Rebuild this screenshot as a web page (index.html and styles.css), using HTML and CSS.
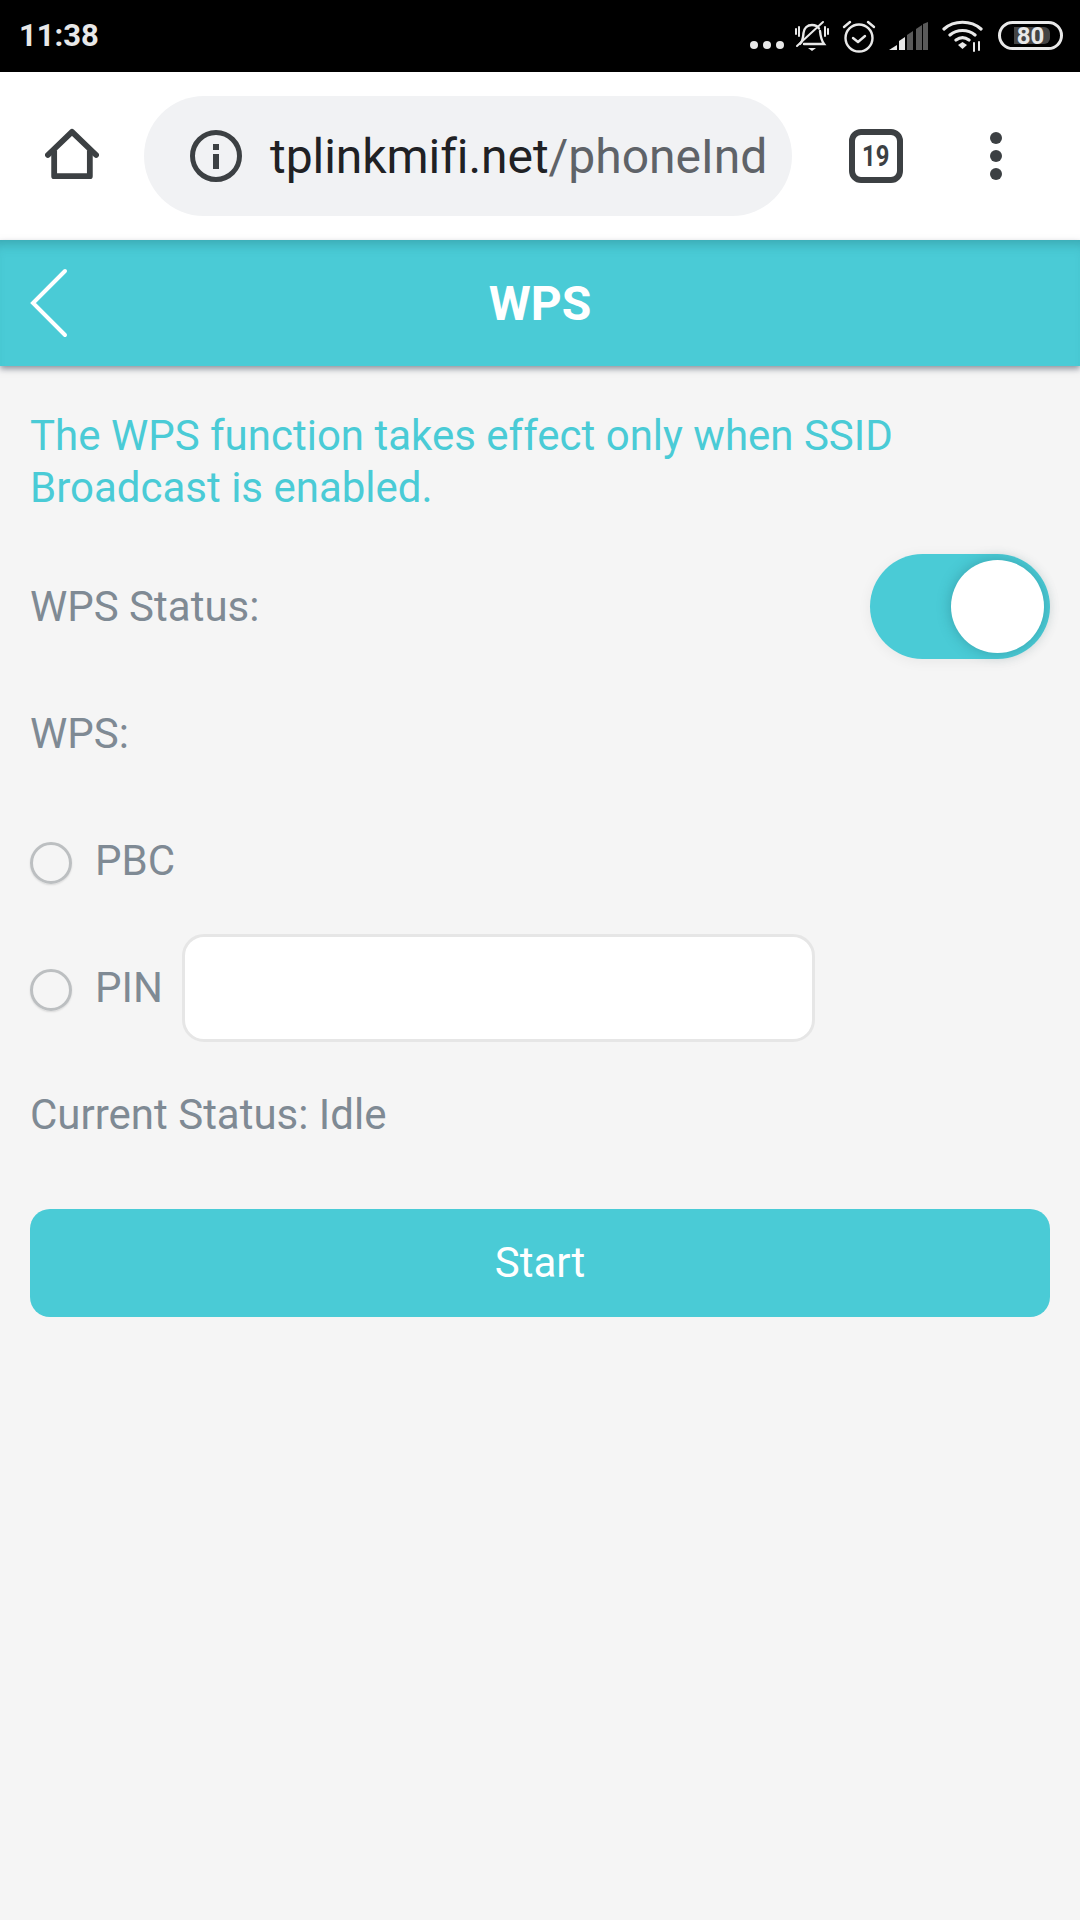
FILE: index.html
```html
<!DOCTYPE html>
<html lang="en">
<head>
    <meta charset="UTF-8">
    <meta name="viewport" content="width=device-width, initial-scale=1.0">
    <title>WPS</title>
    <link rel="stylesheet" href="styles.css">
</head>
<body>

<div class="status-bar">
    <span class="clock">11:38</span>
    <div class="status-icons">
        <svg class="ic-dots" width="38" height="10" viewBox="0 0 38 10"><circle cx="4" cy="5" r="4"/><circle cx="17" cy="5" r="4"/><circle cx="30" cy="5" r="4"/></svg>
        <svg class="ic-bell" width="34" height="32" viewBox="0 0 34 32" fill="none" stroke="#e8e8e8" stroke-width="2.4" stroke-linecap="round">
            <path d="M5 24c3-3 3-6 3.500-11 .5-5 4-8 8.500-8 3 0 5.500 1 7 3.500M25 11c.5 5 1 9 4 13H9"/>
            <path d="M2 26L28 2" stroke-width="2"/>
            <path d="M13 28h8l-4 3z" fill="#e8e8e8" stroke="none"/>
            <path d="M1 9v5M4 7v9M30 7v9M33 9v5" stroke-width="2"/>
        </svg>
        <svg class="ic-alarm" width="34" height="33" viewBox="0 0 34 33" fill="none" stroke="#e8e8e8" stroke-width="2.400" stroke-linecap="round" stroke-linejoin="round">
            <circle cx="17" cy="18" r="13.500"/>
            <path d="M11 18l5 4 7-6"/>
            <path d="M2 7l6-5M32 7l-6-5"/>
        </svg>
        <svg class="ic-signal" width="40" height="28" viewBox="0 0 40 28">
            <path d="M0 28l8-5v5z" fill="#e8e8e8"/>
            <path d="M10 28V19l6-4v13z" fill="#e8e8e8"/>
            <path d="M18 28V13l6-4v19zM27 28V7l6-4v25z" fill="#5a5a5a"/>
            <path d="M34 28V2l5-2v28z" fill="#5a5a5a"/>
        </svg>
        <svg class="ic-wifi" width="42" height="32" viewBox="0 0 42 32" fill="none" stroke="#e8e8e8" stroke-width="3.200" stroke-linecap="round">
            <path d="M2 9c10-9 27-9 37 0M8 15c7-6 18-6 25 0M14 20c4-3 9-3 13 0"/>
            <path d="M16 25l4.500-3 4.500 3-4.500 4z" fill="#e8e8e8" stroke="none"/>
            <path d="M32 23v8M37 22v8" stroke-width="2"/>
        </svg>
        <div class="battery"><div class="battery-fill"></div><span class="battery-num">80</span></div>
    </div>
</div>

<div class="browser-bar">
    <svg class="ic-home" width="54" height="54" viewBox="0 0 56 56" fill="none" stroke="#3c4043" stroke-width="6" stroke-linecap="round" stroke-linejoin="round">
        <path d="M3 28L28 4l25 24"/>
        <path d="M9.500 23v27h37V23" stroke-linecap="butt"/>
    </svg>
    <div class="omnibox">
        <svg class="ic-info" width="52" height="52" viewBox="0 0 52 52">
            <circle cx="26" cy="26" r="23.500" fill="none" stroke="#3c4043" stroke-width="5"/>
            <rect x="23" y="14" width="6" height="6" fill="#3c4043"/>
            <rect x="23" y="24" width="6" height="15" fill="#3c4043"/>
        </svg>
        <div class="url"><span class="host">tplinkmifi.net</span>/phoneInd</div>
    </div>
    <div class="tab-count"><span>19</span></div>
    <div class="menu-dots"><i></i><i></i><i></i></div>
</div>

<div class="header">
    <svg class="back" width="40" height="72" viewBox="0 0 40 72" fill="none" stroke="#fff" stroke-width="4" stroke-linecap="round" stroke-linejoin="miter">
        <path d="M36 3L4 35l32 32"/>
    </svg>
    <h1>WPS</h1>
</div>

<div class="content">
    <p class="notice">The WPS function takes effect only when SSID Broadcast is enabled.</p>

    <div class="row row-status">
        <span>WPS Status:</span>
        <div class="toggle"><div class="knob"></div></div>
    </div>

    <div class="row row-wps"><span>WPS:</span></div>

    <div class="row row-pbc">
        <div class="radio"></div>
        <span>PBC</span>
    </div>

    <div class="row row-pin">
        <div class="radio"></div>
        <span>PIN</span>
        <input class="pin-input" type="text">
    </div>

    <div class="row row-current"><span>Current Status: Idle</span></div>

    <button class="start-btn">Start</button>
</div>

</body>
</html>
```
FILE: styles.css
```css
* {
    box-sizing: border-box;
}

html, body {
    margin: 0;
    height: 1920px;
    overflow: hidden;
}

body {
    background-color: #f5f5f5;
    font-family: Roboto, Arial, sans-serif;
    color: #7f8a94;
}

/* status bar */
.status-bar {
    height: 72px;
    background-color: #000;
    display: flex;
    align-items: center;
    justify-content: space-between;
    padding: 0 17px 0 19px;
}

.clock {
    font-size: 31px;
    font-weight: 700;
    color: #e8e8e8;
    margin-top: -1px;
}

.status-icons {
    display: flex;
    align-items: center;
    height: 72px;
}

.ic-dots {
    fill: #e8e8e8;
    margin: 18px 7px 0 0;
}

.ic-bell {
    margin: 0 13px 0 0;
}

.ic-alarm {
    margin: 0 13px 0 0;
}

.ic-signal {
    margin: -1px 13px 0 0;
}

.ic-wifi {
    margin: 0 14px 0 0;
}

.battery {
    position: relative;
    width: 65px;
    height: 29px;
    border: 3px solid #e8e8e8;
    border-radius: 15px;
    margin-top: -1px;
    display: flex;
    align-items: center;
    justify-content: center;
}

.battery-fill {
    position: absolute;
    left: 13px;
    top: 3px;
    bottom: 3px;
    width: 36px;
    background-color: #444;
    border-radius: 0 6px 6px 0;
}

.battery-num {
    position: relative;
    font-size: 24px;
    font-weight: 700;
    color: #e8e8e8;
    line-height: 1;
}

/* browser toolbar */
.browser-bar {
    height: 168px;
    background-color: #fff;
    display: flex;
    align-items: center;
    padding-left: 45px;
}

.ic-home {
    flex: none;
    margin-top: -2px;
}

.omnibox {
    width: 648px;
    height: 120px;
    margin-left: 45px;
    background-color: #f1f2f4;
    border-radius: 60px;
    display: flex;
    align-items: center;
    padding-left: 46px;
    overflow: hidden;
}

.ic-info {
    flex: none;
}

.url {
    margin-left: 28px;
    font-size: 48px;
    color: #5f6368;
    white-space: nowrap;
    letter-spacing: -0.05px;
}

.host {
    color: #202124;
}

.tab-count {
    width: 54px;
    height: 54px;
    margin-left: 57px;
    border: 6px solid #3c4043;
    border-radius: 12px;
    display: flex;
    align-items: center;
    justify-content: center;
    font-size: 29px;
    font-weight: 700;
    color: #3c4043;
}

.tab-count span {
    transform: scaleX(0.82);
}

.menu-dots {
    margin-left: 87px;
    display: flex;
    flex-direction: column;
    gap: 6px;
}

.menu-dots i {
    display: block;
    width: 12px;
    height: 12px;
    border-radius: 50%;
    background-color: #3c4043;
}

/* page header */
.header {
    position: relative;
    height: 126px;
    background-color: #4acbd6;
    box-shadow: 0 3px 6px rgba(60, 70, 90, 0.55), inset 0 12px 12px -8px rgba(30, 100, 110, 0.35);
    display: flex;
    align-items: center;
    justify-content: center;
}

.header h1 {
    margin: 0;
    font-size: 48px;
    font-weight: 700;
    color: #fff;
}

.back {
    position: absolute;
    left: 29px;
    top: 28px;
}

/* content */
.content {
    padding: 44px 30px 0;
    font-size: 42px;
}

.notice {
    margin: 0;
    line-height: 52px;
    color: #4acbd6;
}

.row {
    display: flex;
    align-items: center;
    line-height: 48px;
}

.row-status {
    justify-content: space-between;
    margin-top: 40px;
    height: 105px;
}

.row-wps {
    margin-top: 23px;
    height: 104px;
}

.row-pbc {
    margin-top: 23px;
    height: 104px;
}

.row-pin {
    margin-top: 21px;
    height: 108px;
}

.row-current {
    margin-top: 21px;
    height: 104px;
}

.toggle {
    width: 180px;
    height: 105px;
    border-radius: 53px;
    background-color: #4acbd6;
    display: flex;
    align-items: center;
    justify-content: flex-end;
    padding-right: 6px;
    box-shadow: 0 2px 14px rgba(0, 0, 0, 0.06);
}

.knob {
    width: 93px;
    height: 93px;
    border-radius: 50%;
    background-color: #fff;
    box-shadow: 0 0 14px rgba(30, 100, 110, 0.4);
}

.radio {
    flex: none;
    width: 42px;
    height: 42px;
    margin: 4px 23px 0 0;
    border: 3px solid #bcbfc1;
    border-radius: 50%;
    box-shadow: 0 1px 2px rgba(0, 0, 0, 0.12);
}

.pin-input {
    width: 633px;
    height: 108px;
    margin-left: 19px;
    background-color: #fff;
    border: 3px solid #e6e6e6;
    border-radius: 22px;
    outline: none;
}

.start-btn {
    display: block;
    width: 100%;
    height: 108px;
    margin-top: 42px;
    padding-bottom: 3px;
    background-color: #4acbd6;
    border: none;
    border-radius: 20px;
    font-family: Roboto, Arial, sans-serif;
    font-size: 42px;
    color: #fff;
}
```
